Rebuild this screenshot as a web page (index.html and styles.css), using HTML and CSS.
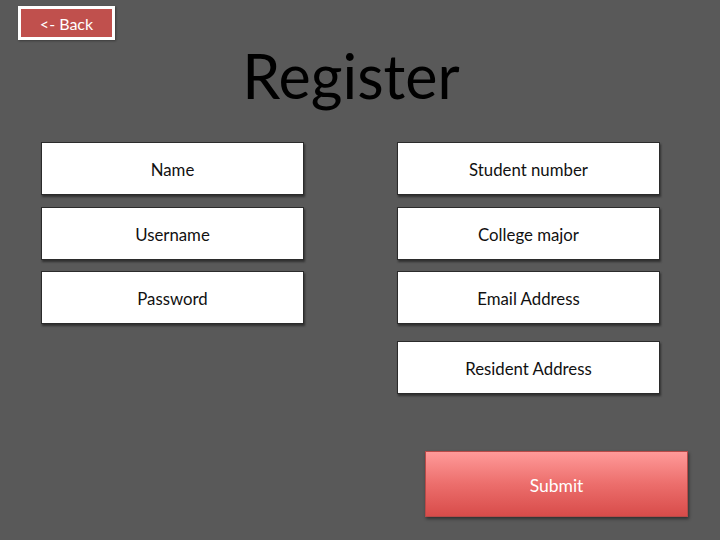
FILE: index.html
```html
<!DOCTYPE html>
<html>
<head>
<meta charset="utf-8">
<link rel="stylesheet" href="styles.css">
</head>
<body>
<div class="page">
  <div class="topbar">
    <button class="back">&lt;- Back</button>
  </div>
  <h1 class="title">Register</h1>
  <div class="fields">
    <div class="col">
      <div class="field">Name</div>
      <div class="field">Username</div>
      <div class="field">Password</div>
    </div>
    <div class="col">
      <div class="field">Student number</div>
      <div class="field">College major</div>
      <div class="field">Email Address</div>
      <div class="field extra">Resident Address</div>
    </div>
  </div>
  <div class="actions">
    <button class="submit">Submit</button>
  </div>
</div>
</body>
</html>
```
FILE: styles.css
```css
html, body {
  margin: 0;
  padding: 0;
}
body {
  background: #595959;
  font-family: Lato, "Open Sans", sans-serif;
  width: 720px;
  height: 540px;
  overflow: hidden;
}
.page {
  display: flex;
  flex-direction: column;
}
.topbar {
  display: flex;
  padding: 6px 0 0 18px;
}
.back {
  box-sizing: border-box;
  width: 97px;
  height: 34px;
  background: #c0504d;
  border: 3px solid #ffffff;
  color: #ffffff;
  font-family: inherit;
  font-size: 16px;
  padding: 1px 0 0 0;
  box-shadow: 1px 1px 2px rgba(0,0,0,0.35);
}
.title {
  margin: 1px 0 0 0;
  padding-right: 18px;
  text-align: center;
  font-weight: normal;
  font-size: 61px;
  line-height: 70px;
  color: #000000;
}
.fields {
  display: flex;
  gap: 93px;
  padding-left: 41px;
  margin-top: 31px;
}
.col {
  display: flex;
  flex-direction: column;
  gap: 11.5px;
}
.field {
  box-sizing: border-box;
  width: 263px;
  height: 53px;
  padding-top: 2px;
  background: #ffffff;
  border: 1px solid #2b2b2b;
  box-shadow: 1px 2px 2px rgba(0,0,0,0.45);
  display: flex;
  align-items: center;
  justify-content: center;
  font-size: 16.8px;
  color: #111111;
}
.field.extra {
  margin-top: 5px;
}
.actions {
  display: flex;
  padding-left: 425px;
  margin-top: 57px;
}
.submit {
  box-sizing: border-box;
  width: 263px;
  height: 66px;
  border: 1px solid #b84a48;
  background: linear-gradient(to bottom, #ff9a99 0%, #ec6e6c 50%, #d84c4a 100%);
  color: #ffffff;
  font-family: inherit;
  font-size: 17.5px;
  padding: 4px 0 0 0;
  box-shadow: 1px 2px 3px rgba(0,0,0,0.45);
}
```
